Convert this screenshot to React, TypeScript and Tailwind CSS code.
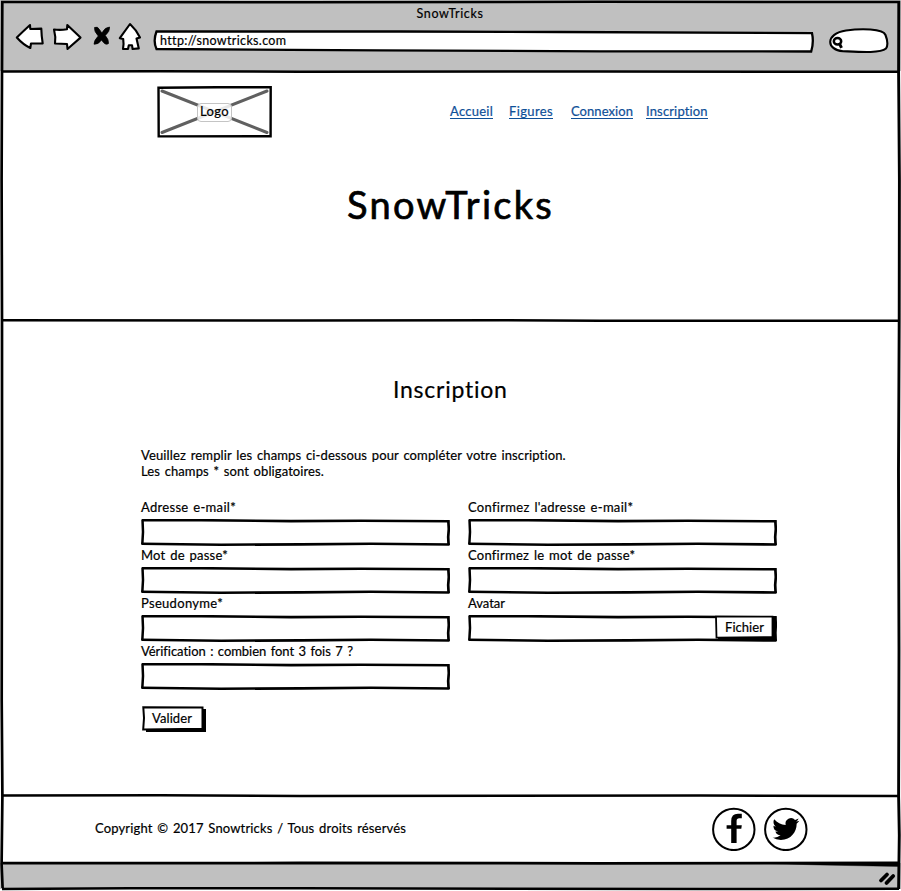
import { useLayoutEffect, useRef, useState } from "react";
import type { ReactNode } from "react";

/** Single line of text whose letters are spaced to fill a given width. */
function Line({ text, width, className = "" }: { text: string; width: number; className?: string }) {
  const ref = useRef<HTMLSpanElement>(null);
  const [spacing, setSpacing] = useState(0);
  useLayoutEffect(() => {
    const el = ref.current;
    if (!el) return;
    el.style.letterSpacing = "0px";
    const next = (width - el.getBoundingClientRect().width) / text.length;
    el.style.letterSpacing = `${next}px`;
    setSpacing(next);
  }, [text, width]);
  return (
    <span ref={ref} className={`inline-block whitespace-nowrap [word-spacing:1.2px] ${className}`} style={{ letterSpacing: spacing }}>
      {text}
    </span>
  );
}

/** Hand-drawn outline of a text field. */
function FieldOutline() {
  return (
    <svg className="absolute inset-0" width="309" height="27" viewBox="0 0 309 27" fill="none" stroke="#000">
      <path d="M1 1.3 L60 1.2 L150 2.1 L220 1.7 L308.3 2.3" strokeWidth="2.6" />
      <path d="M1.5 .5 L2 13 L1.3 25.4" strokeWidth="2.5" />
      <path d="M.5 24.8 L80 25.7 L160 25.4 L230 24.8 L308.5 25.5" strokeWidth="2.6" />
      <path d="M307.3 1.2 L307.8 10 L307.2 18 L307.6 26" strokeWidth="2.7" />
    </svg>
  );
}

function Field({ label, width, children }: { label: string; width: number; children?: ReactNode }) {
  return (
    <label className="block h-12">
      <span className="flex h-5 items-start leading-4">
        <Line text={label} width={width} />
      </span>
      <span className="relative flex h-[27px] w-[309px] justify-end">
        <FieldOutline />
        {children}
      </span>
    </label>
  );
}

function NavLink({ text, width, className = "" }: { text: string; width: number; className?: string }) {
  return (
    <a className={`block h-[15px] border-b border-[#0f5098] leading-[14px] text-[#0f5098] ${className}`}>
      <Line text={text} width={width} />
    </a>
  );
}

function BrowserIcons() {
  return (
    <svg className="shrink-0" width="128" height="30" viewBox="15 22 128 30" fill="#fff" stroke="#000" strokeWidth="2.1" strokeLinejoin="round">
      <path d="M16.8 37.5 Q24 30.5 30 25 L30.3 29 L41.3 28.6 Q41.5 36 42.7 43.5 L31 43.5 L30.3 48 Q23 44.5 16.8 37.5Z" />
      <path d="M54 29.5 Q60 30.3 67 29.3 L67.3 25 L80.5 37.6 L67.5 49 L67 44 L55 43.5 Q56 37 54 29.5Z" />
      <path d="M94.5 27.5 Q97.5 26 99.5 29.5 L101.8 33 Q105 27 109.6 27 Q110 31.5 105.3 35.5 Q108.8 39.5 108.5 43.5 Q105.5 46 101.5 40 Q98.5 44.8 94 44.2 Q93.8 40.5 98.3 36 Q94 31.5 94.5 27.5Z" fill="#000" strokeWidth=".7" />
      <path d="M130 24 Q136 29.5 140 37.5 L136.5 38.5 L138.8 48.4 L132.6 49 L132 45.2 L128.8 45.2 L128 49 L123 49 Q124 44 123.2 39 L119.8 38.2 Q125 31 130 24Z" />
    </svg>
  );
}

function Toolbar() {
  return (
    <header className="flex h-[71px] flex-col bg-[#c0c0c0]">
      <div className="flex h-[27px] items-center justify-center pr-px pt-0.5 text-[12.5px]">
        <Line text="SnowTricks" width={67} />
      </div>
      <div className="flex h-[30px] -mt-[5px] items-start pl-[15px]">
        <BrowserIcons />
        <div className="relative ml-2.5 mt-[7px] flex h-[23px] w-[662px] items-center pl-[7px] pt-0.5 text-[12.5px]">
          <svg className="absolute inset-0" width="662" height="24" viewBox="153 29 662 24" fill="#fff" stroke="#000" strokeWidth="2.3">
            <path d="M156.5 31.5 L400 31.5 L560 32 L812 33.2 Q814 42 811.2 51.5 L600 51.3 L380 50.4 L290 49.8 L156.5 49 Q152.8 41 156.5 31.5Z" />
          </svg>
          <Line text="http://snowtricks.com" width={126} className="relative" />
        </div>
        <svg className="ml-[13px] mt-[5px]" width="62" height="27" viewBox="828 27 62 27" fill="#fff" stroke="#000" strokeWidth="2.1">
          <path d="M846 30.5 C861 28.5 883 28.5 885.5 35 Q889 44 886 48.5 C880 53.5 860 52 843 51.2 C826 50 825 33.5 846 30.5Z" />
          <ellipse cx="837.5" cy="41.2" rx="3.7" ry="3.2" strokeWidth="2.5" />
          <path d="M839.3 43.3 L841.5 47.8" strokeWidth="3" />
        </svg>
      </div>
    </header>
  );
}

function LogoBox() {
  return (
    <div className="relative flex h-[52px] w-[115px] items-center justify-center">
      <svg className="absolute inset-0" width="115" height="52" viewBox="0 0 115 52" fill="none">
        <path d="M1.5 1.7 L60 1.2 L113.7 1.2 L113.6 50.3 L1.7 50.4Z" stroke="#000" strokeWidth="2.4" />
        <path d="M5 5 L110 46.5 M5 46.5 L110 5" stroke="#606060" strokeWidth="3" strokeLinecap="round" />
      </svg>
      <div className="relative flex h-[19px] w-[35px] items-center justify-center rounded-sm border border-[#c4c4c4] bg-white/85">
        <Line text="Logo" width={29} />
      </div>
    </div>
  );
}

function Facebook() {
  return (
    <svg width="44" height="44" viewBox="0 0 44 44">
      <circle cx="21.8" cy="22.4" r="20.7" fill="#fff" stroke="#000" strokeWidth="2" />
      <path d="M19.2 36 V21.8 H14.6 V18.3 H19.2 V14 Q19.2 6.8 26 6.8 H29.8 V11.2 H27.2 Q24.6 11.2 24.6 13.9 V18.3 H29.8 L29.3 21.8 H24.6 V36Z" />
    </svg>
  );
}

function Twitter() {
  return (
    <svg width="44" height="44" viewBox="0 0 44 44">
      <circle cx="21.8" cy="22.4" r="20.7" fill="#fff" stroke="#000" strokeWidth="2" />
      <svg x="8.4" y="8.6" width="27" height="27" viewBox="0 0 24 24">
        <path d="M23.95 4.57a10 10 0 0 1-2.82.77 4.96 4.96 0 0 0 2.16-2.72c-.95.55-2 .95-3.13 1.18a4.92 4.92 0 0 0-8.38 4.48C7.69 8.1 4.07 6.13 1.64 3.16a4.82 4.82 0 0 0-.67 2.48c0 1.71.87 3.21 2.19 4.1a4.9 4.9 0 0 1-2.23-.62v.06a4.92 4.92 0 0 0 3.95 4.83 5 5 0 0 1-2.21.08 4.94 4.94 0 0 0 4.6 3.42A9.87 9.87 0 0 1 0 19.54a13.99 13.99 0 0 0 7.55 2.21c9.05 0 14-7.5 14-13.98 0-.21 0-.42-.02-.63a9.94 9.94 0 0 0 2.46-2.55z" />
      </svg>
    </svg>
  );
}

/** Uneven pen strokes of the window frame and its horizontal dividers. */
function FrameStrokes() {
  return (
    <svg className="pointer-events-none absolute inset-0" width="901" height="891" viewBox="0 0 901 891" fill="none" stroke="#000" strokeWidth="2.5">
      <path d="M1 2 L300 2.2 L600 1.8 L900 2" />
      <path d="M2.3 1 L2 72 L1.6 180 L2 320 L2 470 L1.7 700 L2.4 796 L1.6 864 L2.6 888" strokeWidth="2.7" />
      <path d="M898.8 1 L898.6 72 L899.4 180 L899.2 320 L898.5 470 L899 650 L898.6 796 L899.3 835 L898.6 889" strokeWidth="2.9" />
      <path d="M2 71.4 L160 71.2 L300 71.8 L600 71.5 L899 71.8" />
      <path d="M2 320.2 L300 320.5 L500 320.2 L600 320.7 L899 320.8" />
      <path d="M2 795.4 L160 795.2 L300 795.9 L700 795.6 L899 796" />
      <path d="M2 863.2 L300 863 L600 863.3 L899 863" strokeWidth="2.8" />
      <path d="M760 863.2 L899 863 L899 866.5 L820 865Z" fill="#000" strokeWidth=".4" />
      <path d="M2 889 L130 888.3 L300 888.3 L700 889 L899 888.7" />
      <path d="M881 880.5 L887 874.5 M886.5 883 L893.2 876" strokeWidth="3.8" strokeLinecap="round" />
    </svg>
  );
}

export default function App() {
  return (
    <div className="relative flex h-[891px] w-[901px] flex-col overflow-hidden bg-white font-['Lato',sans-serif] text-[13px] text-black [-webkit-text-stroke:0.2px]">
      <Toolbar />

      <section className="h-[249px] pt-[15px]">
        <div className="flex items-start pl-[157px]">
          <LogoBox />
          <nav className="ml-[178px] mt-[18px] flex">
            <NavLink text="Accueil" width={43} />
            <NavLink text="Figures" width={44} className="ml-4" />
            <NavLink text="Connexion" width={62} className="ml-[18px]" />
            <NavLink text="Inscription" width={62} className="ml-[13px]" />
          </nav>
        </div>
        <h1 className="mt-[42px] pl-[347px] text-[38px] leading-[48px] [-webkit-text-stroke:0.7px]">
          <Line text="SnowTricks" width={207} />
        </h1>
      </section>

      <main className="h-[475px] pl-[141px] pt-[53px]">
        <h2 className="pl-[252px] text-[23px] leading-8">
          <Line text="Inscription" width={115} />
        </h2>
        <div className="mt-[42px] flex flex-col items-start leading-4">
          <Line text="Veuillez remplir les champs ci-dessous pour compléter votre inscription." width={425} />
          <Line text="Les champs * sont obligatoires." width={183} />
        </div>
        <form className="mt-5 flex gap-[18px]">
          <div>
            <Field label="Adresse e-mail*" width={95} />
            <Field label="Mot de passe*" width={87} />
            <Field label="Pseudonyme*" width={82} />
            <Field label="Vérification : combien font 3 fois 7 ?" width={212} />
            <button type="button" className="relative mt-[15px] ml-px flex h-[26px] w-[65px] items-start pl-[10px] pt-[4px] leading-4">
              <svg className="absolute inset-0" width="65" height="27" viewBox="0 0 65 27">
                <path d="M4 3 H64 V26 H4Z" />
                <path d="M1.3 1.3 L60.5 1.5 L60.5 22.7 L1.2 23.5 L2 12Z" fill="#fff" stroke="#000" strokeWidth="2" />
              </svg>
              <Line text="Valider" width={40} className="relative" />
            </button>
          </div>
          <div>
            <Field label="Confirmez l'adresse e-mail*" width={165} />
            <Field label="Confirmez le mot de passe*" width={167} />
            <Field label="Avatar" width={37}>
              <span className="relative flex h-[27px] w-[62px] items-start pl-[10px] pt-[4px] leading-4">
                <svg className="absolute inset-0" width="62" height="27" viewBox="0 0 62 27">
                  <path d="M3 1 L61 1 L61.5 25.8 L3 25.5Z" />
                  <path d="M1 1.7 L57.5 1.7 L57.5 22 L1.5 22.7Z" fill="#fff" stroke="#000" strokeWidth="1.8" />
                </svg>
                <Line text="Fichier" width={39} className="relative" />
              </span>
            </Field>
          </div>
        </form>
      </main>

      <footer className="flex h-[68px] items-center justify-between pl-[95px] pr-[93px]">
        <Line text="Copyright © 2017 Snowtricks / Tous droits réservés" width={311} />
        <div className="flex gap-2">
          <Facebook />
          <Twitter />
        </div>
      </footer>

      <div className="h-[26px] bg-[#c0c0c0]" />
      <FrameStrokes />
    </div>
  );
}
